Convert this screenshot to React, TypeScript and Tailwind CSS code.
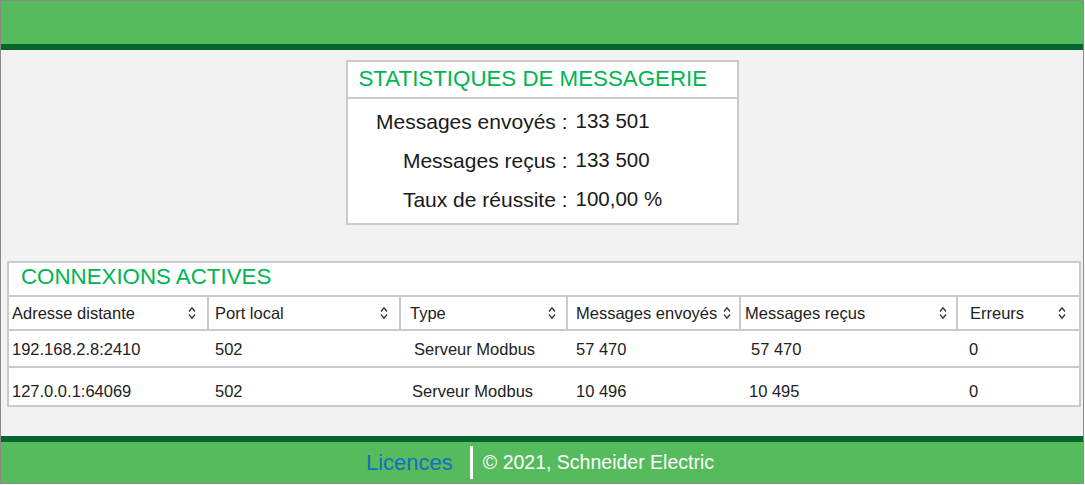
import React from "react";

const SortIcon = () => (
  <svg width="8" height="14" viewBox="0 0 8 14" className="shrink-0">
    <path d="M1 5.5 L4 1.8 L7 5.5" fill="none" stroke="#333" strokeWidth="1.3" />
    <path d="M1 8.5 L4 12.2 L7 8.5" fill="none" stroke="#333" strokeWidth="1.3" />
  </svg>
);

const cols = [
  { w: "w-[200px]", hp: "pl-[3px] pr-[11px]", label: "Adresse distante" },
  { w: "w-[192px]", hp: "pl-[6px] pr-[11px]", label: "Port local" },
  { w: "w-[167px]", hp: "pl-[9px] pr-[10px]", label: "Type" },
  { w: "w-[173px]", hp: "pl-[8px] pr-[8px]", label: "Messages envoyés" },
  { w: "w-[217px]", hp: "pl-[4px] pr-[9px]", label: "Messages reçus" },
  { w: "w-[121px]", hp: "pl-[12px] pr-[13px]", label: "Erreurs" },
];

const rows = [
  {
    cls: "h-[37px] items-center pt-[2px]",
    cells: [
      { t: "192.168.2.8:2410", p: "pl-[3px]" },
      { t: "502", p: "pl-[6px]" },
      { t: "Serveur Modbus", p: "pl-[13px]" },
      { t: "57 470", p: "pl-[8px]" },
      { t: "57 470", p: "pl-[10px]" },
      { t: "0", p: "pl-[11px]" },
    ],
  },
  {
    cls: "h-[37px] items-center pt-[10px]",
    cells: [
      { t: "127.0.0.1:64069", p: "pl-[3px]" },
      { t: "502", p: "pl-[6px]" },
      { t: "Serveur Modbus", p: "pl-[11px]" },
      { t: "10 496", p: "pl-[8px]" },
      { t: "10 495", p: "pl-[8px]" },
      { t: "0", p: "pl-[11px]" },
    ],
  },
];

export default function App() {
  return (
    <div className="w-[1084px] h-[484px] border border-[#8a8a8a] bg-[#f2f2f2] flex flex-col font-['Liberation_Sans',Arial,sans-serif] text-[#1a1a1a]">
      <div className="h-[49px] shrink-0 bg-[#55bb5c] border-b-[6px] border-[#04652f]" />
      <div className="flex-1 flex flex-col">
        <div className="mt-[10px] self-center w-[393px] border-2 border-[#cacaca] bg-white">
          <div className="h-[37px] border-b-2 border-[#cacaca] flex items-center pl-[11px] text-[22.3px] text-[#00b451] leading-none">
            STATISTIQUES DE MESSAGERIE
          </div>
          <div className="pt-[3px] pb-[4px]">
            {[
              ["Messages envoyés :", "133 501"],
              ["Messages reçus :", "133 500"],
              ["Taux de réussite :", "100,00 %"],
            ].map(([l, v]) => (
              <div key={l} className="h-[39px] flex items-center">
                <div className="w-[220px] text-right text-[21px]">{l}</div>
                <div className="pl-[8px] text-[20.5px]">{v}</div>
              </div>
            ))}
          </div>
        </div>
        <div className="mt-[36px] ml-[6px] w-[1074px] border-2 border-[#cacaca] bg-white">
          <div className="h-[32px] flex items-center pl-[12px] pb-[4px] text-[22.3px] text-[#00b451] leading-none">
            CONNEXIONS ACTIVES
          </div>
          <div className="flex h-[36px] border-y-2 border-[#cacaca] text-[16.5px] text-[#222]">
            {cols.map((c, i) => (
              <div
                key={c.label}
                className={`${c.w} ${c.hp} flex items-center justify-between ${i < cols.length - 1 ? "border-r-2 border-[#cacaca]" : ""}`}
              >
                <span>{c.label}</span>
                <SortIcon />
              </div>
            ))}
          </div>
          {rows.map((r, ri) => (
            <div
              key={ri}
              className={`flex text-[16.5px] text-[#222] ${r.cls} ${ri === 0 ? "border-b-2 border-[#cacaca]" : ""}`}
            >
              {r.cells.map((c, ci) => (
                <div key={ci} className={`${cols[ci].w} ${c.p}`}>
                  {c.t}
                </div>
              ))}
            </div>
          ))}
        </div>
      </div>
      <div className="h-[47px] shrink-0 bg-[#55bb5c] border-t-[6px] border-[#04652f] flex items-center justify-center pr-[4px]">
        <span className="text-[22px] text-[#1370c0]">Licences</span>
        <span className="ml-[17px] w-[3px] h-[33px] bg-white" />
        <span className="ml-[10px] text-[19.5px] text-white">© 2021, Schneider Electric</span>
      </div>
    </div>
  );
}
